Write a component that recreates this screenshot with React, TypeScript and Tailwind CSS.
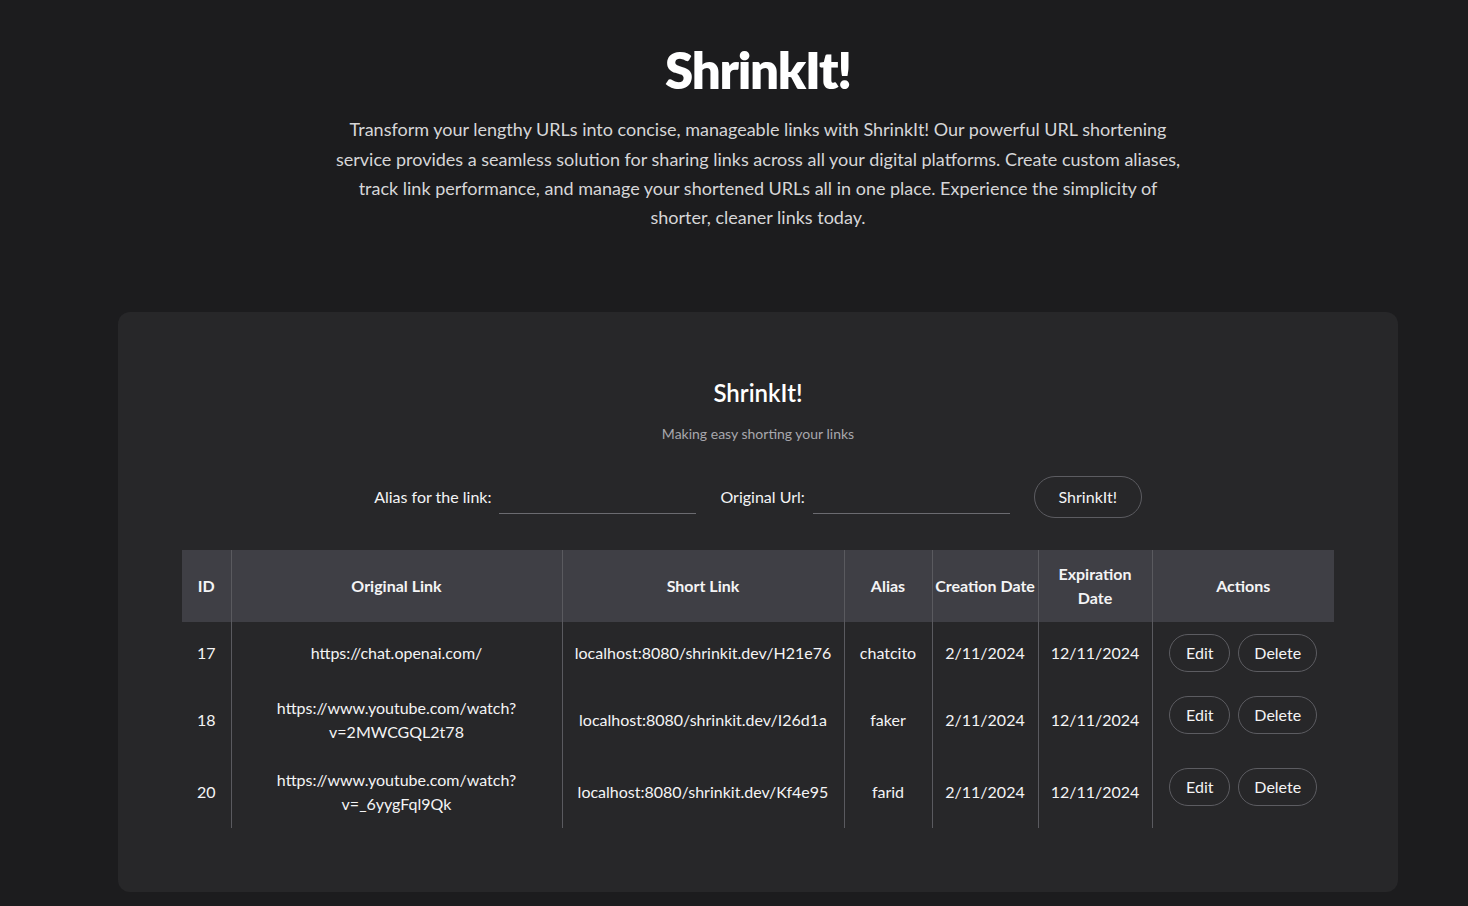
import React from 'react'

type Link = {
  id: number
  original: string[]
  short: string
  alias: string
  created: string
  expires: string
}

const links: Link[] = [
  { id: 17, original: ['https://chat.openai.com/'], short: 'localhost:8080/shrinkit.dev/H21e76', alias: 'chatcito', created: '2/11/2024', expires: '12/11/2024' },
  { id: 18, original: ['https://www.youtube.com/watch?', 'v=2MWCGQL2t78'], short: 'localhost:8080/shrinkit.dev/I26d1a', alias: 'faker', created: '2/11/2024', expires: '12/11/2024' },
  { id: 20, original: ['https://www.youtube.com/watch?', 'v=_6yygFql9Qk'], short: 'localhost:8080/shrinkit.dev/Kf4e95', alias: 'farid', created: '2/11/2024', expires: '12/11/2024' },
]

const pill = 'rounded-full border border-[#5c5c61] bg-transparent text-[16px] text-[#f4f4f5] flex items-center justify-center'

const App = () => {
  return (
    <div
      className="min-h-[906px] w-full bg-[#1c1c1e] text-[#f4f4f5] pl-[48px]"
      style={{ fontFamily: 'Lato, "Noto Sans", sans-serif' }}
    >
      <div className="flex flex-col items-center pt-[42px] pb-[15px]">
        {/* hero */}
        <h1 className="text-[51px] leading-[1.1] font-extrabold tracking-tight text-white">ShrinkIt!</h1>
        <p className="mt-[17px] max-w-[860px] text-center text-[18px] leading-[29.4px] text-[#d6d6d8]">
          Transform your lengthy URLs into concise, manageable links with ShrinkIt! Our powerful URL shortening service provides a seamless solution for sharing links across all your digital platforms. Create custom aliases, track link performance, and manage your shortened URLs all in one place. Experience the simplicity of shorter, cleaner links today.
        </p>

        {/* card */}
        <div className="mt-[79px] w-[1280px] rounded-xl bg-[#272729] px-16 pt-[67px] pb-16 flex flex-col items-center">
          <h2 className="text-[24px] leading-[28px] font-semibold text-white">ShrinkIt!</h2>
          <p className="mt-[17px] text-[14px] leading-[20px] text-[#a8a8ad]">Making easy shorting your links</p>

          <div className="mt-[32px] flex items-center">
            <label className="text-[16px] mr-2">Alias for the link:</label>
            <input className="w-[197px] h-[34px] bg-transparent border-b border-[#6b6b70] outline-none text-white" />
            <label className="text-[16px] ml-6 mr-2">Original Url:</label>
            <input className="w-[197px] h-[34px] bg-transparent border-b border-[#6b6b70] outline-none text-white" />
            <button className={`${pill} ml-6 w-[108px] h-[42px] text-[15px]`}>ShrinkIt!</button>
          </div>

          <table className="mt-[32px] w-[1152px] table-fixed border-collapse text-[16px] leading-6">
            <colgroup>
              <col className="w-[49px]" />
              <col className="w-[331px]" />
              <col className="w-[282px]" />
              <col className="w-[88px]" />
              <col className="w-[106px]" />
              <col className="w-[114px]" />
              <col className="w-[182px]" />
            </colgroup>
            <thead>
              <tr className="bg-[#3f3f45] font-bold">
                {['ID', 'Original Link', 'Short Link', 'Alias', 'Creation Date', 'Expiration Date', 'Actions'].map((h, i) => (
                  <th
                    key={h}
                    className={`py-3 px-[2px] text-center align-middle font-bold ${i === 4 ? 'whitespace-nowrap' : ''} ${i > 0 ? 'border-l border-[#5a5a5f]' : ''}`}
                  >
                    {h}
                  </th>
                ))}
              </tr>
            </thead>
            <tbody>
              {links.map((l) => (
                <tr key={l.id}>
                  <td className="py-3 px-1 text-center align-middle">{l.id}</td>
                  <td className="py-3 px-1 text-center align-middle border-l border-[#5a5a5f]">
                    {l.original.map((o) => (
                      <div key={o}>{o}</div>
                    ))}
                  </td>
                  <td className="py-3 px-1 text-center align-middle border-l border-[#5a5a5f]">{l.short}</td>
                  <td className="py-3 px-1 text-center align-middle border-l border-[#5a5a5f]">{l.alias}</td>
                  <td className="py-3 px-1 text-center align-middle border-l border-[#5a5a5f]">{l.created}</td>
                  <td className="py-3 px-1 text-center align-middle border-l border-[#5a5a5f]">{l.expires}</td>
                  <td className="py-3 px-1 align-top border-l border-[#5a5a5f]">
                    <div className="flex justify-center gap-2">
                      <button className={`${pill} w-[61px] h-[38px]`}>Edit</button>
                      <button className={`${pill} w-[79px] h-[38px]`}>Delete</button>
                    </div>
                  </td>
                </tr>
              ))}
            </tbody>
          </table>
        </div>
      </div>
    </div>
  )
}

export default App
